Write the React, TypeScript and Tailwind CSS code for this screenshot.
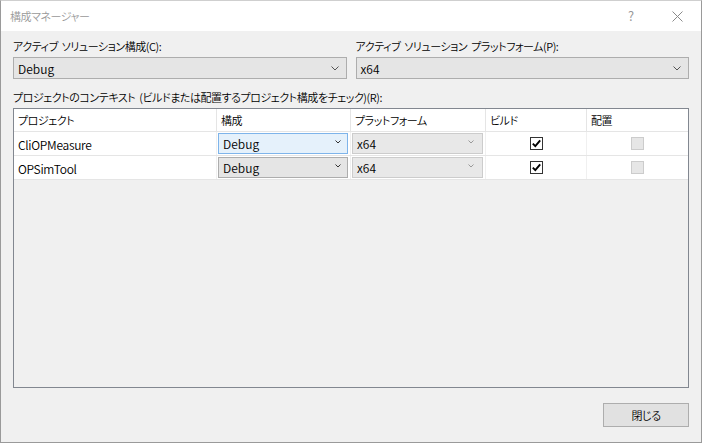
const font = "[font-family:'Noto_Sans_CJK_JP',sans-serif] [font-feature-settings:'palt']";
const jp = "text-[11px] tracking-[-0.45px] [word-spacing:2px]";

const Chevron = ({ className = "", w = 7 }: { className?: string; w?: number }) => (
    <svg width={w} height={w / 2 + 1} viewBox={`0 0 ${w} ${w / 2 + 1}`} className={className}>
        <path d={`M0.5 0.5 L${w / 2} ${w / 2} L${w - 0.5} 0.5`} fill="none" stroke="currentColor" strokeWidth="1" />
    </svg>
);

const Select = ({
    value,
    className,
    chevron,
    w,
}: {
    value: string;
    className: string;
    chevron: string;
    w?: number;
}) => (
    <div className={`flex items-center justify-between border px-[4px] ${className}`}>
        <span className="leading-none pt-[1px]">{value}</span>
        <Chevron className={chevron} w={w} />
    </div>
);

const CheckBox = ({ checked, disabled }: { checked?: boolean; disabled?: boolean }) => (
    <div
        className={`w-[13px] h-[13px] border flex items-center justify-center ${
            disabled ? "border-[#cccccc] bg-[#e6e6e6]" : "border-[#333333] bg-white"
        }`}
    >
        {checked && (
            <svg width="11" height="11" viewBox="0 0 11 11">
                <path d="M1.8 5.6 L4.3 8.2 L9.2 2.4" fill="none" stroke="#000" strokeWidth="1.9" />
            </svg>
        )}
    </div>
);

const rows = ["CliOPMeasure", "OPSimTool"];

export default function App() {
    return (
        <div className={`w-[703px] h-[443px] bg-white ${font} font-[350] text-[12px] text-black`}>
            <div className="w-[702px] h-[443px] border border-[#9a9a9a] border-t-[#cfcfcf] flex flex-col bg-[#f0f0f0]">
                {/* title bar */}
                <div className="h-[30px] bg-white flex items-center pl-[9px] text-[#999999]">
                    <span className={jp}>構成マネージャー</span>
                    <span className="ml-auto mr-[38px] text-[13px]">?</span>
                    <svg width="11" height="11" viewBox="0 0 11 11" className="mr-[18px]">
                        <path d="M0.5 0.5 L10.5 10.5 M10.5 0.5 L0.5 10.5" stroke="#8a8a8a" strokeWidth="1" />
                    </svg>
                </div>

                <div className="flex-1 flex flex-col px-[12px] pt-[7px]">
                    <div className="grid grid-cols-2 gap-[9px]">
                        <div className="flex flex-col gap-[3px]">
                            <span className={`leading-[16px] ${jp}`}>アクティブ ソリューション構成(C):</span>
                            <Select
                                value="Debug"
                                className="h-[22px] bg-[#e5e5e5] border-[#adadad]"
                                chevron="text-[#555555] mr-[3px]"
                                w={8}
                            />
                        </div>
                        <div className="flex flex-col gap-[3px]">
                            <span className={`leading-[16px] ${jp}`}>アクティブ ソリューション プラットフォーム(P):</span>
                            <Select
                                value="x64"
                                className="h-[22px] bg-[#e5e5e5] border-[#adadad]"
                                chevron="text-[#555555] mr-[3px]"
                                w={8}
                            />
                        </div>
                    </div>

                    <span className={`leading-[16px] mt-[10px] ${jp}`}>
                        プロジェクトのコンテキスト (ビルドまたは配置するプロジェクト構成をチェック)(R):
                    </span>

                    <div className="mt-[3px] h-[280px] border border-[#828790] bg-[#f0f0f0] flex flex-col">
                        <div className={`grid grid-cols-[203px_134px_135px_101px_1fr] h-[23px] bg-white border-b border-[#e5e5e5] ${jp}`}>
                            <div className="pl-[4px] pt-[1px] flex items-center border-r border-[#e5e5e5]">プロジェクト</div>
                            <div className="pl-[4px] pt-[1px] flex items-center border-r border-[#e5e5e5]">構成</div>
                            <div className="pl-[4px] pt-[1px] flex items-center border-r border-[#e5e5e5]">プラットフォーム</div>
                            <div className="pl-[4px] pt-[1px] flex items-center border-r border-[#e5e5e5]">ビルド</div>
                            <div className="pl-[4px] pt-[1px] flex items-center">配置</div>
                        </div>
                        {rows.map((name, i) => (
                            <div
                                key={name}
                                className="grid grid-cols-[203px_134px_135px_101px_1fr] h-[24px] bg-white border-b border-[#e5e5e5]"
                            >
                                <div className="pl-[4px] pt-[2px] flex items-center border-r border-[#f0f0f0] tracking-[-0.3px]">
                                    {name}
                                </div>
                                <div className="p-[1px] pr-[2px] border-r border-[#f0f0f0]">
                                    <Select
                                        value="Debug"
                                        className={`h-full ${
                                            i === 0 ? "bg-[#e5f1fb] border-[#7eb4ea]" : "bg-[#e5e5e5] border-[#adadad]"
                                        }`}
                                        chevron="text-[#333333] mr-[2px] mb-[3px]"
                                        w={6}
                                    />
                                </div>
                                <div className="p-[1px] pr-[2px] border-r border-[#f0f0f0]">
                                    <Select
                                        value="x64"
                                        className="h-full bg-[#e8e8e8] border-[#cccccc]"
                                        chevron="text-[#999999] mr-[4px] mb-[3px]"
                                        w={6}
                                    />
                                </div>
                                <div className="flex items-center justify-center border-r border-[#f0f0f0]">
                                    <CheckBox checked />
                                </div>
                                <div className="flex items-center justify-center">
                                    <CheckBox disabled />
                                </div>
                            </div>
                        ))}
                    </div>

                    <div className="mt-[15px] flex justify-end">
                        <button
                            type="button"
                            className={`w-[86px] h-[24px] bg-[#e1e1e1] border border-[#adadad] ${jp}`}
                        >
                            閉じる
                        </button>
                    </div>
                </div>
            </div>
        </div>
    );
}
